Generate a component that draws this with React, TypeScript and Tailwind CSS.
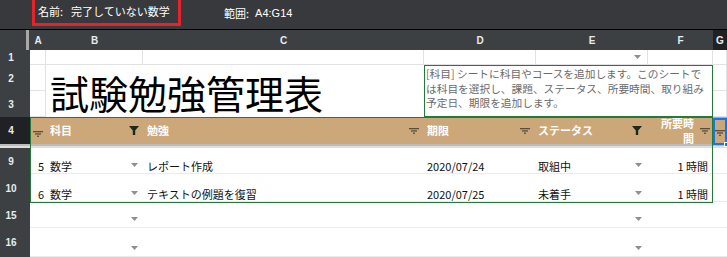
import React from "react";

const jp = "font-['Noto_Sans_CJK_JP',sans-serif]";
const lat = "font-['Liberation_Sans','Noto_Sans_CJK_JP',sans-serif]";

function FilterIcon({ active = false }: { active?: boolean }) {
  if (active) {
    return (
      <svg width="10" height="9" viewBox="0 0 10 9" className="shrink-0">
        <path d="M0 0h10L6.2 4.4V9H3.8V4.4z" fill="#1c2a1c" />
      </svg>
    );
  }
  return (
    <svg width="10" height="6" viewBox="0 0 10 6" className="shrink-0">
      <rect x="0" y="0" width="10" height="1.3" fill="#5a4f3c" />
      <rect x="2" y="2.3" width="6" height="1.3" fill="#5a4f3c" />
      <rect x="4" y="4.6" width="2" height="1.3" fill="#5a4f3c" />
    </svg>
  );
}

function Arrow() {
  return (
    <svg width="7" height="4" viewBox="0 0 7 4" className="shrink-0">
      <path d="M0 0h7L3.5 4z" fill="#8f8f8f" />
    </svg>
  );
}

function RowHead({ n, dark = false }: { n: string; dark?: boolean }) {
  return (
    <div
      className={`flex items-center justify-center pr-[8px] text-[10px] font-bold text-[#e8eaed] ${lat} ${
        dark ? "bg-[#202124]" : "bg-[#3c4043]"
      }`}
    >
      {n}
    </div>
  );
}

const grid = "border-r border-b border-[#e2e2e2] bg-white";

function DataRow({
  rh,
  idx,
  subj,
  task,
  due,
  status,
  hours,
}: {
  rh: string;
  idx?: string;
  subj?: string;
  task?: string;
  due?: string;
  status?: string;
  hours?: string;
}) {
  const cell = `bg-white border-b border-[#ebebeb] flex items-end pb-[1px] text-[11px] leading-[12px] text-[#111] ${jp}`;
  return (
    <>
      <RowHead n={rh} />
      <div className={`${cell} justify-end pr-[2px]`}>{idx}</div>
      <div className={`${cell} justify-between pl-[4px] pr-[5px]`}>
        <span>{subj}</span>
        <span className="mb-[5px]">
          <Arrow />
        </span>
      </div>
      <div className={`${cell} pl-[4px]`}>{task}</div>
      <div className={`${cell} pl-[3px] ${lat} text-[11.5px]`}>{due}</div>
      <div className={`${cell} justify-between pl-[2px] pr-[6px]`}>
        <span>{status}</span>
        <span className="mb-[5px]">
          <Arrow />
        </span>
      </div>
      <div className={`${cell} justify-end pr-[5px]`}>{hours}</div>
      <div className={cell} />
    </>
  );
}

export default function App() {
  const letters = ["A", "B", "C", "D", "E", "F"];
  return (
    <div className="w-[727px] h-[257px] overflow-hidden bg-white">
      <div
        className={`h-[30px] bg-[#37393c] border-b border-black flex items-start pl-[32px] text-[11px] text-white ${jp}`}
      >
        <div className="h-[26px] w-[149px] border-[3px] border-t-0 border-[#e5232a] flex items-center pl-[3px]">
          <span>名前:</span>
          <span className="ml-[8px]">完了していない数学</span>
        </div>
        <div className="h-[26px] flex items-center ml-[43px]">
          <span>範囲:</span>
          <span className={`ml-[6px] ${lat}`}>A4:G14</span>
        </div>
      </div>

      <div className="relative grid grid-cols-[30px_16px_97px_281px_112px_112px_65px_14px] grid-rows-[20px_15px_26px_26px_27px_4px_26px_28px_26px_29px]">
        {/* column header row */}
        <div className="bg-[#3c4043] flex justify-end pr-[1px]">
          <div className="w-[3px] h-full bg-[#a8a8a8]" />
        </div>
        {letters.map((l) => (
          <div
            key={l}
            className={`bg-[#3c4043] flex items-center justify-center text-[10px] font-bold text-[#e8eaed] ${lat}`}
          >
            {l}
          </div>
        ))}
        <div
          className={`bg-[#202124] flex items-center justify-center text-[10px] font-bold text-[#e8eaed] ${lat}`}
        >
          G
        </div>

        {/* row 1 */}
        <RowHead n="1" />
        <div className={grid} />
        <div className={grid} />
        <div className={grid} />
        <div className={grid} />
        <div className={`${grid} flex items-center justify-end pr-[6px]`}>
          <Arrow />
        </div>
        <div className={grid} />
        <div className={grid} />

        {/* rows 2-3 */}
        <RowHead n="2" />
        <div className={grid} />
        <div
          className={`col-span-2 row-span-2 bg-white flex items-center pl-[4px] pt-[2px] text-[39px] leading-none text-black ${jp}`}
        >
          試験勉強管理表
        </div>
        <div
          className={`col-span-3 row-span-2 bg-white border border-[#237b3a] pl-[1px] pt-[1px] text-[10.7px] leading-[14.5px] text-[#6b6b6b] whitespace-nowrap ${jp}`}
        >
          [科目] シートに科目やコースを追加します。このシートで
          <br />
          は科目を選択し、課題、ステータス、所要時間、取り組み
          <br />
          予定日、期限を追加します。
        </div>
        <div className={grid} />
        <RowHead n="3" />
        <div className={grid} />
        <div className={grid} />

        {/* row 4 header */}
        <RowHead n="4" dark />
        <div className="bg-[#cca779] flex items-center justify-end pr-[3px] pt-[6px]">
          <FilterIcon />
        </div>
        <div
          className={`bg-[#cca779] flex items-center justify-between pl-[4px] pr-[4px] text-[11px] font-bold text-white ${jp}`}
        >
          <span>科目</span>
          <FilterIcon active />
        </div>
        <div
          className={`bg-[#cca779] flex items-center justify-between pl-[4px] pr-[5px] text-[11px] font-bold text-white ${jp}`}
        >
          <span>勉強</span>
          <FilterIcon />
        </div>
        <div
          className={`bg-[#cca779] flex items-center justify-between pl-[3px] pr-[6px] text-[11px] font-bold text-white ${jp}`}
        >
          <span>期限</span>
          <FilterIcon />
        </div>
        <div
          className={`bg-[#cca779] flex items-center justify-between pl-[2px] pr-[6px] text-[11px] font-bold text-white ${jp}`}
        >
          <span>ステータス</span>
          <FilterIcon active />
        </div>
        <div
          className={`bg-[#cca779] flex items-center justify-end gap-[6px] pr-[3px] text-[11px] leading-[15px] font-bold text-white ${jp}`}
        >
          <span className="text-right">
            所要時
            <br />間
          </span>
          <FilterIcon />
        </div>
        <div className="bg-[#cca779] flex items-center justify-center pt-[4px]">
          <FilterIcon />
        </div>

        {/* frozen divider */}
        <div className="col-span-8 flex flex-col">
          <div className="h-[2px] bg-[#bcbcbc]" />
          <div className="flex-1 bg-[#dedede]" />
        </div>

        <DataRow rh="9" idx="5" subj="数学" task="レポート作成" due="2020/07/24" status="取組中" hours="1 時間" />
        <DataRow rh="10" idx="6" subj="数学" task="テキストの例題を復習" due="2020/07/25" status="未着手" hours="1 時間" />
        <DataRow rh="15" />
        <DataRow rh="16" />

        {/* named range outline A4:F10 */}
        <div className="absolute left-[30px] top-[87px] w-[683px] h-[86px] border-[1.5px] border-[#237b3a] pointer-events-none" />
        {/* active cell G4 */}
        <div className="absolute left-[713px] top-[88px] w-[14px] h-[27px] border-2 border-[#1a73e8] pointer-events-none" />
        <div className="absolute left-[724px] top-[112px] w-[5px] h-[5px] bg-[#1a73e8] border border-white pointer-events-none" />
      </div>
    </div>
  );
}
